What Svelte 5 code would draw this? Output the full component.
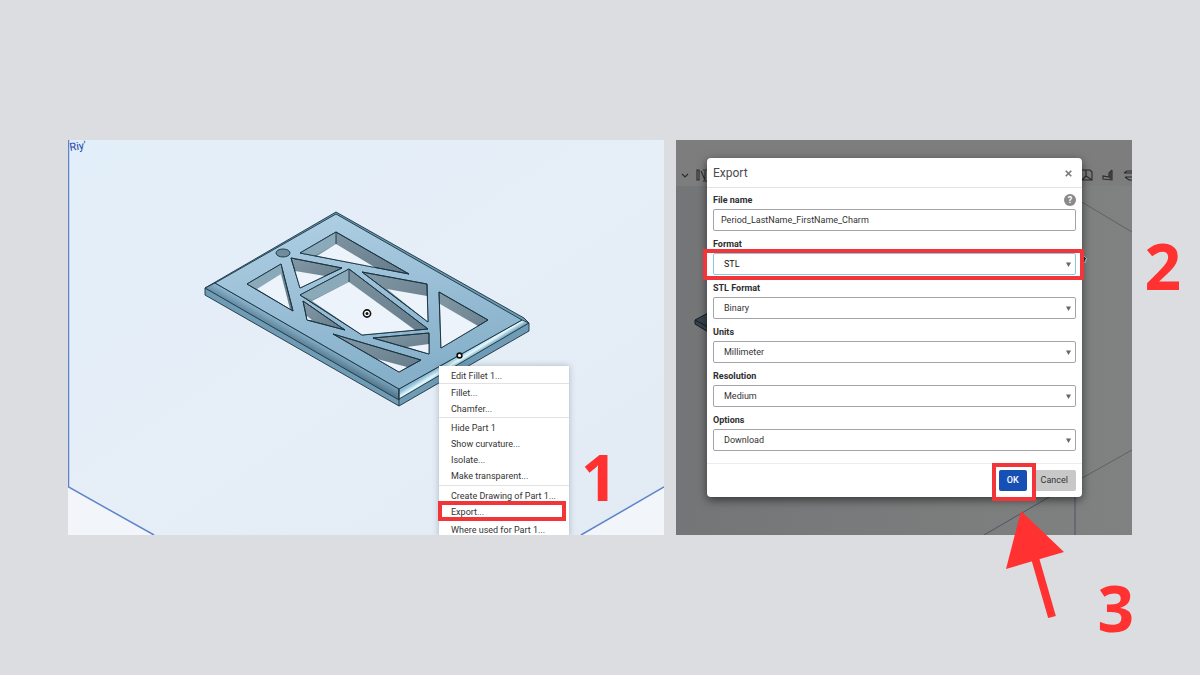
<script lang="ts">
    type SelectField = {
        id: string;
        label: string;
        value: string;
        options: string[];
        marked?: boolean;
    };

    let fileName: string = "Period_LastName_FirstName_Charm";

    const menuGroups: string[][] = [
        ["Edit Fillet 1..."],
        ["Fillet...", "Chamfer..."],
        ["Hide Part 1", "Show curvature...", "Isolate...", "Make transparent..."],
        ["Create Drawing of Part 1...", "Export..."],
        ["Where used for Part 1..."],
    ];

    let fields: SelectField[] = [
        { id: "format", label: "Format", value: "STL", options: ["STL"], marked: true },
        { id: "stl-format", label: "STL Format", value: "Binary", options: ["Binary"] },
        { id: "units", label: "Units", value: "Millimeter", options: ["Millimeter"] },
        { id: "resolution", label: "Resolution", value: "Medium", options: ["Medium"] },
        { id: "options", label: "Options", value: "Download", options: ["Download"] },
    ];

    // Cut-outs of the charm: outline of each hole, side wall in light, visible floor
    const holes = [
        { rim: "300,253 336,232 409,274", wall: "300,253 336,232 336,244 314,256", floor: "317,256 336,244 376,268" },
        { rim: "291,258 342,268 300,288", wall: "", floor: "295,271 325,276 300,288" },
        { rim: "247,284 281,264 293,311", wall: "247,284 281,264 282,274 257,289", floor: "257,289 281,274 290,309" },
        { rim: "300,295 349,269 428,329 362,335", wall: "300,295 349,269 349,282 312,300", floor: "312,301 349,282 415,330 362,335" },
        { rim: "303,301 345,330 307,320", wall: "", floor: "307,316 312,320 307,320" },
        { rim: "362,272 427,284 428,322", wall: "", floor: "387,289 427,296 428,322" },
        { rim: "439,292 488,320 441,348", wall: "", floor: "440,304 478,326 441,348" },
        { rim: "373,338 429,333 429,354", wall: "", floor: "407,347 429,344 429,354" },
        { rim: "333,334 421,360 399,372", wall: "", floor: "377,359 407,367 399,372" },
    ];
</script>

<main class="page">
    <section class="panel viewport" aria-label="Part studio">
        <svg class="scene" viewBox="68 140 596 395" preserveAspectRatio="xMidYMid slice" aria-hidden="true">
            <defs>
                <linearGradient id="sky" x1="0" y1="0" x2="1" y2="1">
                    <stop offset="0" stop-color="#e2eef9" />
                    <stop offset="0.5" stop-color="#e6eef7" />
                    <stop offset="1" stop-color="#e2eaf3" />
                </linearGradient>
                <linearGradient id="face" x1="0" y1="0" x2="0.3" y2="1">
                    <stop offset="0" stop-color="#b2d1e5" />
                    <stop offset="1" stop-color="#86b0ca" />
                </linearGradient>
                <linearGradient id="bevel" gradientUnits="userSpaceOnUse" x1="310" y1="336" x2="304" y2="347">
                    <stop offset="0" stop-color="#8bb5ce" />
                    <stop offset="1" stop-color="#54788d" />
                </linearGradient>
                <linearGradient id="shine" gradientUnits="userSpaceOnUse" x1="460" y1="354" x2="465" y2="362">
                    <stop offset="0" stop-color="#8bbcd4" />
                    <stop offset="0.5" stop-color="#e6fafd" />
                    <stop offset="1" stop-color="#6b9eb8" />
                </linearGradient>
                <linearGradient id="wall" x1="0" y1="0" x2="1" y2="1">
                    <stop offset="0" stop-color="#8399a6" />
                    <stop offset="1" stop-color="#657b89" />
                </linearGradient>
            </defs>
            <rect x="68" y="140" width="596" height="395" fill="url(#sky)" />
            <path d="M68 487L154 535H68ZM664 487L581 535H664Z" fill="#f2f6fb" />
            <path d="M68.5 140V487L154 535M581 535L664 487" fill="none" stroke="#5e83cb" stroke-width="1.5" />
            <text class="axis-name" x="70" y="151" transform="rotate(-8 70 151)">Riy'</text>

            <g stroke="#183342" stroke-width="0.9" stroke-linejoin="round">
                <path d="M205 288L336 212L524 318L529 323V331L399 406L205 295Z" fill="#6f9bb4" />
                <path d="M205 288L215 283L399 389V400Z" fill="url(#bevel)" />
                <path d="M399 389L522 320L529 323L399 399Z" fill="url(#shine)" />
                <path d="M215 283L336 214L522 320L399 389Z" fill="url(#face)" />
                <path d="M399 389V406" fill="none" />
                <ellipse cx="283" cy="253" rx="7" ry="4" fill="#708c9d" />
                {#each holes as hole}
                    <polygon points={hole.rim} fill="url(#wall)" />
                    {#if hole.wall}
                        <polygon points={hole.wall} fill="#8aaaba" stroke="none" />
                    {/if}
                    <polygon points={hole.floor} fill="#edf3fa" stroke="none" />
                    <polygon points={hole.rim} fill="none" />
                {/each}
                <path d="M336 232V244M349 269V282" fill="none" />
            </g>
            <circle cx="367" cy="313.5" r="3.6" fill="#fff" stroke="#111" stroke-width="1.6" />
            <circle cx="367" cy="313.5" r="1.5" fill="#111" />
            <circle cx="459.5" cy="355.5" r="2.4" fill="#fff" stroke="#111" stroke-width="1.6" />
        </svg>

        <div class="menu-clip">
            <div class="context-menu" role="menu">
                {#each menuGroups as group}
                    <div class="menu-group" role="group">
                        {#each group as item}
                            <button class="menu-item" class:marked={item === "Export..."} role="menuitem">{item}</button>
                        {/each}
                    </div>
                {/each}
            </div>
        </div>
        <span class="step step-one">1</span>
    </section>

    <section class="panel backdrop">
        <svg class="scene" viewBox="676 140 456 395" preserveAspectRatio="xMaxYMin slice" aria-hidden="true">
            <defs>
                <linearGradient id="dim" x1="0" y1="0" x2="1" y2="0">
                    <stop offset="0" stop-color="#747577" />
                    <stop offset="1" stop-color="#808281" />
                </linearGradient>
            </defs>
            <rect x="676" y="140" width="456" height="395" fill="url(#dim)" />
            <rect x="676" y="140" width="456" height="46" fill="#7d7d7d" />
            <path d="M1075 198L1132 232M1132 450L1075 482" fill="none" stroke="#5d6068" />
            <path d="M1075 482L984 535M1075 490V535" fill="none" stroke="#4d5368" />
            <path d="M695 320L710 312V333L695 324Z" fill="#36434d" stroke="#161c22" />
            <path d="M695 320L710 328" stroke="#161c22" />
            <g fill="none" stroke="#2b2b2b" stroke-width="1.1">
                <path d="M682 174L685 177L688 174" />
                <path d="M697 170V180H699V170ZM701 171L705 180V171M703 170H709V181H703" />
                <path d="M1080 170H1090L1092 172V180H1080M1086 170V176L1092 180M1086 176L1082 180" />
                <path d="M1112 170V180L1103 179V176L1109 177V173L1112 170" />
                <path d="M1124 173L1127 171H1134M1124 173H1134M1125 177H1134M1125 177L1129 180H1134" />
            </g>
            <path d="M1109 173L1112 170V180L1109 178Z" fill="#3c3c3c" />
            <path d="M1083 255L1087 259L1085 260L1086 262L1084 262L1083 261Z" fill="#222" stroke="#eee" stroke-width="0.7" />
        </svg>

        <form class="dialog" aria-labelledby="dialog-title" on:submit|preventDefault>
            <header class="dialog-header">
                <h2 id="dialog-title">Export</h2>
                <button class="close" type="button" aria-label="Close">
                    <svg width="7" height="7" viewBox="0 0 7 7" stroke="currentColor" stroke-width="1.6" aria-hidden="true">
                        <path d="M0.7 0.7L6.3 6.3M6.3 0.7L0.7 6.3" />
                    </svg>
                </button>
            </header>

            <div class="dialog-body">
                <div class="field">
                    <div class="label-row">
                        <label for="file-name">File name</label>
                        <button class="help" type="button" aria-label="Help">?</button>
                    </div>
                    <input id="file-name" type="text" bind:value={fileName} />
                </div>
                {#each fields as field (field.id)}
                    <div class="field">
                        <div class="label-row">
                            <label for={field.id}>{field.label}</label>
                        </div>
                        <div class="control" class:marked={field.marked}>
                            <select id={field.id} bind:value={field.value}>
                                {#each field.options as option}
                                    <option value={option}>{option}</option>
                                {/each}
                            </select>
                            <svg class="caret" width="5" height="5" viewBox="0 0 5 5" aria-hidden="true">
                                <path d="M0 0.5H5L2.5 5Z" fill="#666" />
                            </svg>
                        </div>
                    </div>
                {/each}
            </div>

            <footer class="dialog-footer">
                <div class="ok-wrap">
                    <button class="btn primary" type="submit">OK</button>
                </div>
                <button class="btn" type="button">Cancel</button>
            </footer>
        </form>

        <span class="step step-two">2</span>
        <svg class="arrow" width="70" height="120" viewBox="1000 505 70 120" aria-hidden="true">
            <path d="M1035 558L1052 617" stroke="#ff3131" stroke-width="8" />
            <path d="M1021 511L1064 552L1006 569Z" fill="#ff3131" />
        </svg>
        <span class="step step-three">3</span>
    </section>
</main>

<style>
    :global(body) {
        background: #dcdde1;
    }

    .page {
        --red: #ff3131;
        --mark: #f23538;
        display: grid;
        grid-template-columns: 596fr 456fr;
        gap: 12px;
        padding: 140px 68px;
        font-family: Roboto, "Liberation Sans", sans-serif;
        font-size: 9px;
        color: #333;
    }

    .panel {
        position: relative;
        min-width: 0;
    }

    .scene {
        position: absolute;
        inset: 0;
        width: 100%;
        height: 100%;
    }

    .axis-name {
        font-size: 11px;
        fill: #2446a8;
    }

    button,
    input,
    select {
        box-sizing: border-box;
        margin: 0;
        font: inherit;
        color: inherit;
    }

    .menu-clip {
        position: absolute;
        inset: 0;
        overflow: hidden;
    }

    .context-menu {
        position: absolute;
        top: 226px;
        left: 371px;
        width: 130px;
        background: #fff;
        box-shadow: 0 0 6px rgba(60, 80, 100, 0.35);
    }

    .menu-group {
        padding: 1px 0 2px;
    }

    .menu-group:first-child {
        padding: 1px 0 0;
    }

    .menu-group:nth-child(2) {
        padding: 0 0 1px;
    }

    .menu-group + .menu-group {
        border-top: 1px solid #e2e2e4;
    }

    .menu-group + .menu-group:last-child {
        padding: 0;
        border-top: none;
    }

    .menu-item {
        position: relative;
        display: block;
        width: 100%;
        height: 16px;
        padding: 2px 12px 0;
        border: none;
        background: none;
        line-height: 14px;
        text-align: left;
        white-space: nowrap;
    }

    .menu-item.marked::after {
        content: "";
        position: absolute;
        inset: -2px 3px -2px -1px;
        border: 4px solid var(--mark);
    }

    .backdrop {
        padding: 18px 50px 38px 31px;
    }

    .dialog {
        position: relative;
        border-radius: 4px;
        background: #fff;
        box-shadow: 0 3px 10px rgba(0, 0, 0, 0.55);
    }

    .dialog-header {
        display: flex;
        align-items: center;
        justify-content: space-between;
        height: 29px;
        padding: 0 10px 0 6px;
        border-bottom: 1px solid #e3e3e5;
    }

    h2 {
        margin: 0;
        font-size: 12px;
        font-weight: 400;
        line-height: 16px;
        color: #4a4d50;
    }

    .close {
        display: flex;
        padding: 2px 0 0;
        border: none;
        background: none;
        color: #777;
    }

    .dialog-body {
        display: grid;
        gap: 6px;
        padding: 5px 6px 12px;
    }

    .label-row {
        display: flex;
        align-items: center;
        justify-content: space-between;
        height: 14px;
        margin-bottom: 2px;
        font-weight: 700;
        line-height: 12px;
        color: #2e2e30;
    }

    .help {
        width: 12px;
        height: 12px;
        padding: 0;
        border: none;
        border-radius: 50%;
        background: #8a8a8c;
        color: #fff;
        font-weight: 700;
        line-height: 12px;
        text-align: center;
    }

    input,
    select {
        display: block;
        width: 100%;
        height: 22px;
        border: 1px solid #a3a4aa;
        border-radius: 2px;
        outline: none;
        background: #fff;
    }

    input {
        padding: 0 7px;
    }

    select {
        appearance: none;
        padding: 0 10px;
    }

    .control {
        position: relative;
    }

    .control.marked select {
        border-color: #8cc8e0;
        color: #111;
    }

    .control.marked::after {
        content: "";
        position: absolute;
        inset: -4px -8px -5px -10px;
        border: 4px solid var(--mark);
        pointer-events: none;
    }

    .caret {
        position: absolute;
        top: 9px;
        right: 5px;
        pointer-events: none;
    }

    .dialog-footer {
        display: flex;
        align-items: center;
        justify-content: flex-end;
        gap: 6px;
        height: 33px;
        padding: 0 6px;
        border-top: 1px solid #ececee;
    }

    .ok-wrap {
        position: relative;
    }

    .ok-wrap::after {
        content: "";
        position: absolute;
        inset: -7px -9px -10px -7px;
        border: 4px solid var(--mark);
        pointer-events: none;
    }

    .btn {
        display: block;
        height: 21px;
        padding: 0 8px;
        border: none;
        border-radius: 2px;
        background: #c8c8c9;
        line-height: 21px;
    }

    .btn.primary {
        background: #1650b4;
        color: #fff;
        font-weight: 500;
    }

    .step {
        position: absolute;
        font-family: "Open Sans", sans-serif;
        font-size: 64px;
        font-weight: 700;
        line-height: 64px;
        color: var(--red);
    }

    .step-one {
        top: 305px;
        left: 513px;
    }

    .step-two {
        top: 94px;
        right: -49px;
    }

    .arrow {
        position: absolute;
        top: 365px;
        right: 62px;
    }

    .step-three {
        top: 436px;
        right: -2px;
    }
</style>
